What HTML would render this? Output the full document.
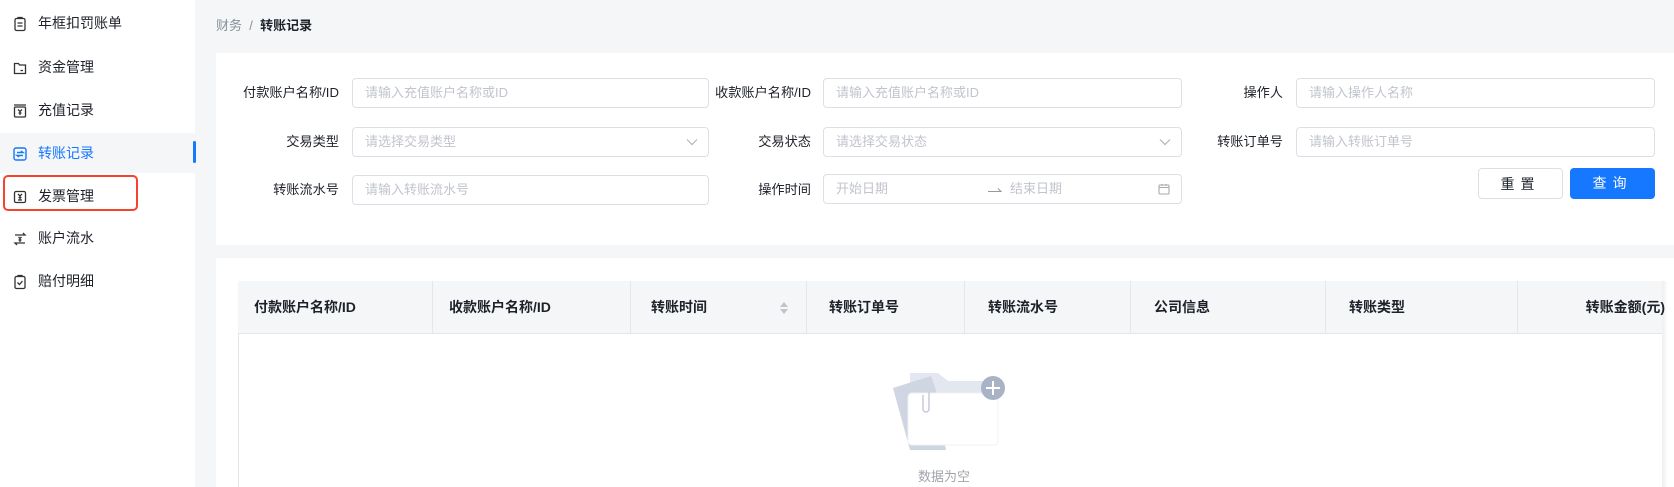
<!DOCTYPE html>
<html><head><meta charset="utf-8"><style>
*{box-sizing:border-box;margin:0;padding:0}
body{width:1674px;height:487px;overflow:hidden;background:#f5f6f8;font-family:"Liberation Sans","Noto Sans CJK SC",sans-serif;font-size:14px;color:#1d2129;position:relative}
.side{position:absolute;left:0;top:0;width:195px;height:487px;background:#fff}
.item{position:absolute;left:0;width:195px;height:40px;display:flex;align-items:center;padding-left:38px;font-size:14px;color:#1d2129}
.item svg{position:absolute;left:12px;top:13px}
.active{background:#f5f6f8;color:#1677ff}
.bar{position:absolute;left:193px;top:141px;width:3px;height:22px;background:#1677ff;border-radius:2px}
.red{position:absolute;left:3px;top:175px;width:135px;height:36px;border:2px solid #f5432d;border-radius:5px}
.crumb{position:absolute;left:216px;top:15px;font-size:13px;color:#86909c}
.crumb b{color:#1d2129;font-weight:600}
.card{position:absolute;background:#fff}
.lbl{position:absolute;font-size:13.2px;text-align:right;line-height:30px;white-space:nowrap}
.inp{position:absolute;height:30px;border:1px solid #dcdfe6;border-radius:4px;line-height:28px;padding-left:12px;color:#c0c4cc;font-size:13px;background:#fff}
.btn{position:absolute;top:168px;width:85px;height:31px;border-radius:4px;text-align:center;line-height:31px;font-size:14px;letter-spacing:6px}
.th{position:absolute;top:281px;height:53px;line-height:53px;font-size:14px;font-weight:600;color:#1d2129}
.div{position:absolute;top:281px;width:1px;height:53px;background:#e5e6eb}
</style></head><body>
<div class="side">
 <div class="item" style="top:3px"><svg width="16" height="16" viewBox="0 0 16 16" fill="none" stroke="#333" stroke-width="1.3"><rect x="3" y="2.5" width="10" height="12" rx="1.5"/><path d="M6 2.5V1.5h4v1M5.5 7h5M5.5 10h5"/></svg>年框扣罚账单</div>
 <div class="item" style="top:47px"><svg width="16" height="16" viewBox="0 0 16 16" fill="none" stroke="#333" stroke-width="1.3"><path d="M2.5 3.5h4l1 1.5h6v8.5h-11z"/><path d="M8.5 10.5h2.5"/></svg>资金管理</div>
 <div class="item" style="top:90px"><svg width="16" height="16" viewBox="0 0 16 16" fill="none" stroke="#333" stroke-width="1.3"><rect x="2.5" y="4" width="11" height="10" rx="1"/><path d="M2 2h12M6 6.5l2 2 2-2M8 8.5v3.5M6.5 10h3"/></svg>充值记录</div>
 <div class="item active" style="top:133px"><svg width="16" height="16" viewBox="0 0 16 16" fill="none" stroke="#1677ff" stroke-width="1.4"><rect x="2" y="2" width="12" height="12" rx="2"/><path d="M5 6.5h6l-2-1.5M11 9.5H5l2 1.5"/></svg>转账记录</div>
 <div class="item" style="top:176px"><svg width="16" height="16" viewBox="0 0 16 16" fill="none" stroke="#333" stroke-width="1.3"><rect x="2.5" y="2.5" width="11" height="11" rx="1.5"/><path d="M6 5l2 2 2-2M8 7v4M6.5 8.5h3M6 11h4"/></svg>发票管理</div>
 <div class="item" style="top:218px"><svg width="16" height="16" viewBox="0 0 16 16" fill="none" stroke="#333" stroke-width="1.3"><path d="M3 4h10l-2-2M13 12H3l2 2"/><path d="M6.5 6l1.5 1.5L9.5 6M8 7.5V11M6.5 9h3"/></svg>账户流水</div>
 <div class="item" style="top:261px"><svg width="16" height="16" viewBox="0 0 16 16" fill="none" stroke="#333" stroke-width="1.3"><rect x="3" y="2.5" width="10" height="12" rx="1.5"/><path d="M6 2.5V1.5h4v1M5.5 8.5l2 2 3-3.5"/></svg>赔付明细</div>
</div>
<div class="bar"></div>
<div class="red"></div>
<div class="crumb">财务&nbsp;&nbsp;/&nbsp;&nbsp;<b>转账记录</b></div>
<div class="card" style="left:216px;top:53px;width:1458px;height:192px"></div>
<div class="lbl" style="right:1335px;top:78px">付款账户名称/ID</div>
<div class="inp" style="left:352px;top:78px;width:357px">请输入充值账户名称或ID</div>
<div class="lbl" style="right:863px;top:78px">收款账户名称/ID</div>
<div class="inp" style="left:823px;top:78px;width:359px">请输入充值账户名称或ID</div>
<div class="lbl" style="right:391px;top:78px">操作人</div>
<div class="inp" style="left:1296px;top:78px;width:359px">请输入操作人名称</div>
<div class="lbl" style="right:1335px;top:127px">交易类型</div>
<div class="inp" style="left:352px;top:127px;width:357px">请选择交易类型<svg style="position:absolute;right:10px;top:10px" width="12" height="8" viewBox="0 0 12 8" fill="none" stroke="#b0b4bb" stroke-width="1.2"><path d="M1 1.5l5 5 5-5"/></svg></div>
<div class="lbl" style="right:863px;top:127px">交易状态</div>
<div class="inp" style="left:823px;top:127px;width:359px">请选择交易状态<svg style="position:absolute;right:10px;top:10px" width="12" height="8" viewBox="0 0 12 8" fill="none" stroke="#b0b4bb" stroke-width="1.2"><path d="M1 1.5l5 5 5-5"/></svg></div>
<div class="lbl" style="right:391px;top:127px">转账订单号</div>
<div class="inp" style="left:1296px;top:127px;width:359px">请输入转账订单号</div>
<div class="lbl" style="right:1335px;top:175px">转账流水号</div>
<div class="inp" style="left:352px;top:175px;width:357px">请输入转账流水号</div>
<div class="lbl" style="right:863px;top:175px">操作时间</div>
<div class="inp" style="left:823px;top:174px;width:359px">开始日期<svg style="position:absolute;left:164px;top:12px" width="14" height="6" viewBox="0 0 14 6" fill="none" stroke="#999" stroke-width="1.1"><path d="M0 4.5h13L10 1.5"/></svg><span style="position:absolute;left:186px">结束日期</span><svg style="position:absolute;right:11px;top:8px" width="12" height="12" viewBox="0 0 12 12" fill="none" stroke="#aaa" stroke-width="1.1"><rect x="1" y="2" width="10" height="9" rx="1"/><path d="M1 4.5h10M4 1v2M8 1v2"/></svg></div>
<div class="btn" style="left:1478px;border:1px solid #dcdfe6;background:#fff;color:#1d2129">重置</div>
<div class="btn" style="left:1570px;background:#1677ff;color:#fff">查询</div>
<div class="card" style="left:216px;top:258px;width:1458px;height:229px"></div>
<div style="position:absolute;left:238px;top:281px;width:1428px;height:53px;background:#f5f6f8;border-bottom:1px solid #e5e6eb"></div>
<div style="position:absolute;left:238px;top:334px;width:1px;height:153px;background:#e5e6eb"></div>
<div style="position:absolute;left:1662px;top:281px;width:6px;height:206px;background:linear-gradient(90deg,#eee,#fff)"></div>
<div class="div" style="left:432px"></div><div class="div" style="left:630px"></div><div class="div" style="left:806px"></div><div class="div" style="left:964px"></div><div class="div" style="left:1130px"></div><div class="div" style="left:1325px"></div><div class="div" style="left:1517px"></div>
<div class="th" style="left:254px">付款账户名称/ID</div>
<div class="th" style="left:449px">收款账户名称/ID</div>
<div class="th" style="left:651px">转账时间</div>
<svg style="position:absolute;left:779px;top:302px" width="10" height="12" viewBox="0 0 10 12" fill="#c0c4cc"><path d="M5 0l4 5H1zM5 12l4-5H1z"/></svg>
<div class="th" style="left:829px">转账订单号</div>
<div class="th" style="left:988px">转账流水号</div>
<div class="th" style="left:1154px">公司信息</div>
<div class="th" style="left:1349px">转账类型</div>
<div class="th" style="right:9px">转账金额(元)</div>
<svg style="position:absolute;left:890px;top:368px" width="120" height="84" viewBox="0 0 120 84">
<path d="M20 5h28l10 8h35v20H20z" fill="#e3e7f0"/>
<path d="M3 20l38-12 5 14 10 60H20z" fill="#cfd5e1"/>
<rect x="18" y="25" width="90" height="52" rx="4" fill="#fff"/>
<rect x="18" y="25" width="90" height="52" rx="4" fill="none" stroke="#eef0f5"/>
<path d="M33 27v14a3 3 0 0 0 6 0V24" fill="none" stroke="#c5ccd9" stroke-width="1.5"/>
<circle cx="103" cy="20" r="12" fill="#a9b3c6"/><path d="M103 13v14M96 20h14" stroke="#fff" stroke-width="2"/>
</svg>
<div style="position:absolute;left:918px;top:466px;font-size:13px;color:#a0a4ab">数据为空</div>
</body></html>
